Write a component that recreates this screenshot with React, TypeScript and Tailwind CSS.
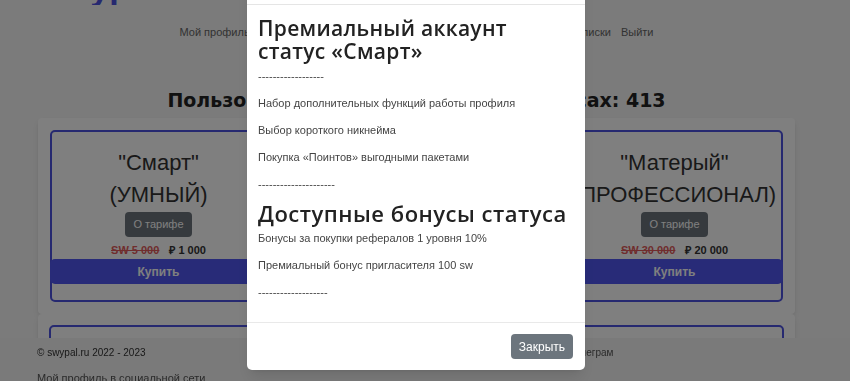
import React from 'react';

type Plan = { name: string; level: string; oldPrice: string; price: string };

const plans: Plan[] = [
  { name: '"Смарт"', level: '(УМНЫЙ)', oldPrice: 'SW 5 000', price: '₽ 1 000' },
  { name: '"Премиум"', level: '(ОПЫТНЫЙ)', oldPrice: 'SW 15 000', price: '₽ 10 000' },
  { name: '"Матерый"', level: '(ПРОФЕССИОНАЛ)', oldPrice: 'SW 30 000', price: '₽ 20 000' },
];

const PlanCard = ({ plan }: { plan: Plan }) => (
  <div className="w-[217px] h-[172px] border-2 border-[#4c52e0] rounded-[5px] flex flex-col items-center pt-[15px]">
    <div className="text-[22px] leading-[32px] text-[#333] text-center whitespace-nowrap">{plan.name}</div>
    <div className="text-[22px] leading-[32px] text-[#333] text-center whitespace-nowrap">{plan.level}</div>
    <button className="h-[25px] px-[8px] text-[11px] text-white bg-[#6c757d] rounded-[4px] mt-[1px]">О тарифе</button>
    <div className="flex gap-[10px] text-[11px] font-bold leading-[16px] mt-[5px]">
      <span className="line-through text-[#e05a5a]">{plan.oldPrice}</span>
      <span className="text-[#333]">{plan.price}</span>
    </div>
    <button className="w-[calc(100%+4px)] -mx-[2px] h-[25px] mt-[1px] bg-[#5057f0] text-white text-[12px] font-bold rounded-[5px]">Купить</button>
  </div>
);

const navItems = ['Тарифы', 'Рефералы', 'Бонусы', 'Подписки', 'Выйти'];

const modalLines = [
  'Набор дополнительных функций работы профиля',
  'Выбор короткого никнейма',
  'Покупка «Поинтов» выгодными пакетами',
];

const headFont = "font-[family-name:'Open_Sans',sans-serif]";

export default function App() {
  return (
    <div className="h-[381px] overflow-hidden bg-[#f6f6f6] font-[family-name:'Liberation_Sans',Arial,sans-serif]">
      <div className="w-[833px]">
        <div className="h-[5px] overflow-hidden flex items-end pl-[45px]">
          <span className="text-[34px] leading-none font-bold text-[#4c52e0]">swypal.ru</span>
        </div>
        <nav className="w-[474px] mx-auto mt-[18px] flex justify-end gap-[10px] text-[11px] leading-[18px] text-[#666]">
          <span className="mr-auto">Мой профиль</span>
          {navItems.map(n => <span key={n}>{n}</span>)}
        </nav>
        <h1 className="mt-[45px] text-center text-[19px] leading-[28px] font-bold text-[#222] font-[family-name:'DejaVu_Sans',sans-serif]">
          Пользователей в премиальных статусах: 413
        </h1>
        <div className="mx-[38px] mt-[4px] p-[12px] bg-white rounded-[4px] shadow-md flex justify-between">
          {plans.map(p => <PlanCard key={p.name} plan={p} />)}
        </div>
        <div className="mx-[38px] p-[11px] bg-white rounded-[4px] shadow-md flex justify-between">
          {plans.map(p => <PlanCard key={p.name + '2'} plan={p} />)}
        </div>
      </div>

      <footer className="fixed left-0 right-0 bottom-0 h-[43px] bg-[#f4f4f4] pl-[37px] pt-[7px] leading-[16px]">
        <div className="flex text-[10px]">
          <span className="w-[459px] text-[#333]">© swypal.ru 2022 - 2023</span>
          <span className="text-[#555]">Мой профиль в телеграм</span>
        </div>
        <div className="mt-[9px] text-[11px] text-[#555]">Мой профиль в социальной сети</div>
      </footer>

      <div className="fixed inset-0 bg-black/50" />

      <div className="fixed left-[247px] top-[-46px] w-[338px] bg-white rounded-[5px] shadow-lg flex flex-col">
        <div className="h-[51px] border-b border-[#e5e5e5] flex items-end justify-between px-[12px] pb-[12px]">
          <span className="text-[16px] text-[#222]">Статус «Смарт»</span>
          <span className="text-[18px] text-[#888]">×</span>
        </div>
        <div className="px-[11px] pt-[12px] pb-[12px] text-[11px] leading-[18px] text-[#444]">
          <h2 className={`max-w-[290px] text-[21px] leading-[23px] font-semibold text-[#222] mb-[4px] tracking-[0.3px] ${headFont}`}>
            Премиальный аккаунт статус «Смарт»
          </h2>
          <p className="mb-[9px]">------------------</p>
          {modalLines.map(l => <p key={l} className="mb-[9px]">{l}</p>)}
          <p className="mb-[9px]">---------------------</p>
          <h2 className={`text-[22px] leading-[23px] font-semibold text-[#222] mb-[4px] tracking-[0.5px] whitespace-nowrap ${headFont}`}>
            Доступные бонусы статуса
          </h2>
          <p className="mb-[9px]">Бонусы за покупки рефералов 1 уровня 10%</p>
          <p className="mb-[9px]">Премиальный бонус пригласителя 100 sw</p>
          <p className="mb-[9px]">-------------------</p>
        </div>
        <div className="border-t border-[#e9e9e9] flex justify-end px-[12px] py-[11px]">
          <button className="h-[25px] px-[8px] text-[12px] text-white bg-[#6c757d] rounded-[4px]">Закрыть</button>
        </div>
      </div>
    </div>
  );
}
